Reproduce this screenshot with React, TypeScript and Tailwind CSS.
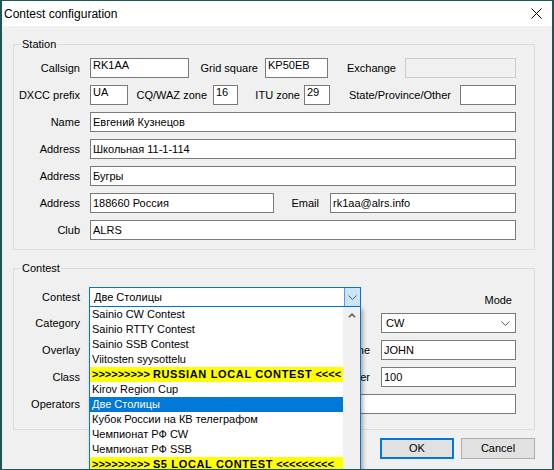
import React from 'react';

type P = { className?: string; children?: React.ReactNode; top?: boolean };

// plain winforms-ish text box
function Box({ className = '', children, top = false }: P) {
    return (
        <div
            className={`h-[20px] shrink-0 border border-[#7a7a7a] bg-white pl-[2px] flex overflow-hidden whitespace-nowrap ${top ? 'items-start leading-[11px] pt-[1px]' : 'items-center leading-[13px]'} ${className}`}
        >
            {children}
        </div>
    );
}

function L({ className = '', children }: P) {
    return <div className={`shrink-0 leading-[13px] whitespace-nowrap ${className}`}>{children}</div>;
}

function Row({ className = '', children }: P) {
    return <div className={`flex items-center h-[20px] ${className}`}>{children}</div>;
}

function Chevron({ className = '' }: { className?: string }) {
    return (
        <svg width="9" height="5" viewBox="0 0 9 5" className={className}>
            <path d="M0.5 0.5 L4.5 4.5 L8.5 0.5" fill="none" stroke="#606060" strokeWidth="1" />
        </svg>
    );
}

function Select({ className = '', children }: P) {
    return (
        <div className={`h-[20px] shrink-0 border border-[#7a7a7a] bg-white flex items-center leading-[13px] ${className}`}>
            <div className="flex-1 pl-[4px] whitespace-nowrap overflow-hidden">{children}</div>
            <Chevron className="mr-[5px]" />
        </div>
    );
}

const contests: { text: string; kind?: 'sep' | 'sel'; tail?: string }[] = [
    { text: 'Sainio CW Contest' },
    { text: 'Sainio RTTY Contest' },
    { text: 'Sainio SSB Contest' },
    { text: 'Viitosten syysottelu' },
    { text: 'RUSSIAN LOCAL CONTEST', kind: 'sep', tail: '<<<<' },
    { text: 'Kirov Region Cup' },
    { text: 'Две Столицы', kind: 'sel' },
    { text: 'Кубок России на КВ телеграфом' },
    { text: 'Чемпионат РФ CW' },
    { text: 'Чемпионат РФ SSB' },
    { text: 'S5 LOCAL CONTEST', kind: 'sep', tail: '<<<<<<<<<' },
];

export default function App() {
    return (
        <div className="w-[554px] h-[470px] overflow-hidden border-t border-b border-l-2 border-r-2 border-[#1c5656] bg-[#f0f0f0] text-black text-[11px] font-['Liberation_Sans',Arial,sans-serif]">
            {/* title bar */}
            <div className="h-[25px] bg-white flex items-center pl-[2px]">
                <span className="text-[12px] flex-1">Contest configuration</span>
                <svg width="11" height="11" viewBox="0 0 11 11" className="mr-[10px]">
                    <path d="M0.5 0.5 L10.5 10.5 M10.5 0.5 L0.5 10.5" stroke="#000" strokeWidth="1" />
                </svg>
            </div>

            {/* Station */}
            <div className="relative ml-[11px] mt-[18px] w-[522px] border border-[#dcdcdc] pt-[13px] pb-[9px] flex flex-col gap-[7px]">
                <span className="absolute top-[-7px] left-[7px] px-[1px] bg-[#f0f0f0] leading-[13px]">Station</span>
                <Row>
                    <L className="w-[66px] text-right mr-[10px]">Callsign</L>
                    <Box top className="w-[99px]">RK1AA</Box>
                    <L className="w-[69px] text-right">Grid square</L>
                    <Box top className="ml-[7px] w-[63px]">KP50EB</Box>
                    <L className="ml-[19px] w-[58px]">Exchange</L>
                    <div className="h-[20px] w-[111px] border border-[#cccccc] bg-[#f0f0f0]" />
                </Row>
                <Row>
                    <L className="w-[66px] text-right mr-[10px]">DXCC prefix</L>
                    <Box top className="w-[38px]">UA</Box>
                    <L className="w-[79px] text-right">CQ/WAZ zone</L>
                    <Box top className="ml-[6px] w-[25px]">16</Box>
                    <L className="w-[62px] text-right">ITU zone</L>
                    <Box top className="ml-[4px] w-[26px]">29</Box>
                    <L className="w-[121px] text-right">State/Province/Other</L>
                    <Box top className="ml-[9px] w-[56px]"></Box>
                </Row>
                <Row>
                    <L className="w-[66px] text-right mr-[10px]">Name</L>
                    <Box className="w-[426px]">Евгений Кузнецов</Box>
                </Row>
                <Row>
                    <L className="w-[66px] text-right mr-[10px]">Address</L>
                    <Box className="w-[426px]">Школьная 11-1-114</Box>
                </Row>
                <Row>
                    <L className="w-[66px] text-right mr-[10px]">Address</L>
                    <Box className="w-[426px]">Бугры</Box>
                </Row>
                <Row>
                    <L className="w-[66px] text-right mr-[10px]">Address</L>
                    <Box className="w-[184px]">188660 Россия</Box>
                    <L className="w-[45px] text-right">Email</L>
                    <Box className="ml-[11px] w-[186px]">rk1aa@alrs.info</Box>
                </Row>
                <Row>
                    <L className="w-[66px] text-right mr-[10px]">Club</L>
                    <Box className="w-[426px]">ALRS</Box>
                </Row>
            </div>

            {/* Contest */}
            <div className="relative ml-[11px] mt-[18px] w-[522px] border border-[#dcdcdc] pt-[18px] pb-[15px] flex flex-col">
                <span className="absolute top-[-7px] left-[7px] px-[1px] bg-[#f0f0f0] leading-[13px]">Contest</span>
                <div className="flex items-center h-[20px]">
                    <L className="w-[66px] text-right mr-[9px]">Contest</L>
                    <div className="relative z-10 w-[272px] h-[20px] border border-[#0078d7] bg-white flex items-center leading-[13px]">
                        <div className="flex-1 pl-[4px] whitespace-nowrap">Две Столицы</div>
                        <div className="w-[16px] h-full bg-[#cce4f7] border-l border-[#569de5] flex items-center justify-center">
                            <Chevron />
                        </div>
                        {/* open dropdown list */}
                        <div className="absolute top-[19px] left-[-1px] w-[272px] h-[170px] border-l border-r border-[#0078d7] bg-white flex shadow-[2px_2px_4px_rgba(0,0,0,0.3)]">
                            <div className="w-[253px] flex flex-col">
                                {contests.map(c => (
                                    <div
                                        key={c.text}
                                        className={`h-[15px] shrink-0 leading-[15px] pl-[2px] whitespace-nowrap overflow-hidden ${c.kind === 'sep' ? 'bg-[#ffff00] font-bold' : c.kind === 'sel' ? 'bg-[#0078d7] text-white' : ''}`}
                                    >
                                        {c.kind === 'sep' ? (
                                            <>
                                                {'>>>>>>>>> '}
                                                <span className="tracking-[0.65px]">{c.text}</span>
                                                {' ' + c.tail}
                                            </>
                                        ) : (
                                            c.text
                                        )}
                                    </div>
                                ))}
                            </div>
                            <div className="w-[17px] bg-[#f0f0f0] flex justify-center pt-[6px]">
                                <svg width="8" height="5" viewBox="0 0 8 5">
                                    <path d="M0.8 4.3 L4 1.2 L7.2 4.3" fill="none" stroke="#606060" strokeWidth="1.6" />
                                </svg>
                            </div>
                        </div>
                    </div>
                    <L className="ml-auto mr-[22px] self-end">Mode</L>
                </div>
                <Row className="mt-[6px]">
                    <L className="w-[66px] text-right mr-[9px]">Category</L>
                    <Select className="w-[230px]"></Select>
                    <div className="w-[51px]" />
                    <Select className="ml-[11px] w-[135px]">CW</Select>
                </Row>
                <Row className="mt-[7px]">
                    <L className="w-[66px] text-right mr-[9px]">Overlay</L>
                    <Select className="w-[230px]"></Select>
                    <L className="w-[51px] text-right">Name</L>
                    <Box className="ml-[11px] w-[135px]">JOHN</Box>
                </Row>
                <Row className="mt-[7px]">
                    <L className="w-[66px] text-right mr-[9px]">Class</L>
                    <Select className="w-[230px]"></Select>
                    <L className="w-[51px] text-right">Power</L>
                    <Box className="ml-[11px] w-[135px]">100</Box>
                </Row>
                <Row className="mt-[7px]">
                    <L className="w-[66px] text-right mr-[9px]">Operators</L>
                    <Box className="w-[427px]"></Box>
                </Row>
            </div>

            {/* buttons */}
            <div className="ml-[11px] mt-[8px] w-[522px] flex justify-end gap-[7px]">
                <button className="w-[74px] h-[21px] border-2 border-[#0078d7] bg-[#e1e1e1] leading-[13px]">OK</button>
                <button className="w-[74px] h-[21px] border border-[#adadad] bg-[#e1e1e1] leading-[13px]">Cancel</button>
            </div>
        </div>
    );
}
